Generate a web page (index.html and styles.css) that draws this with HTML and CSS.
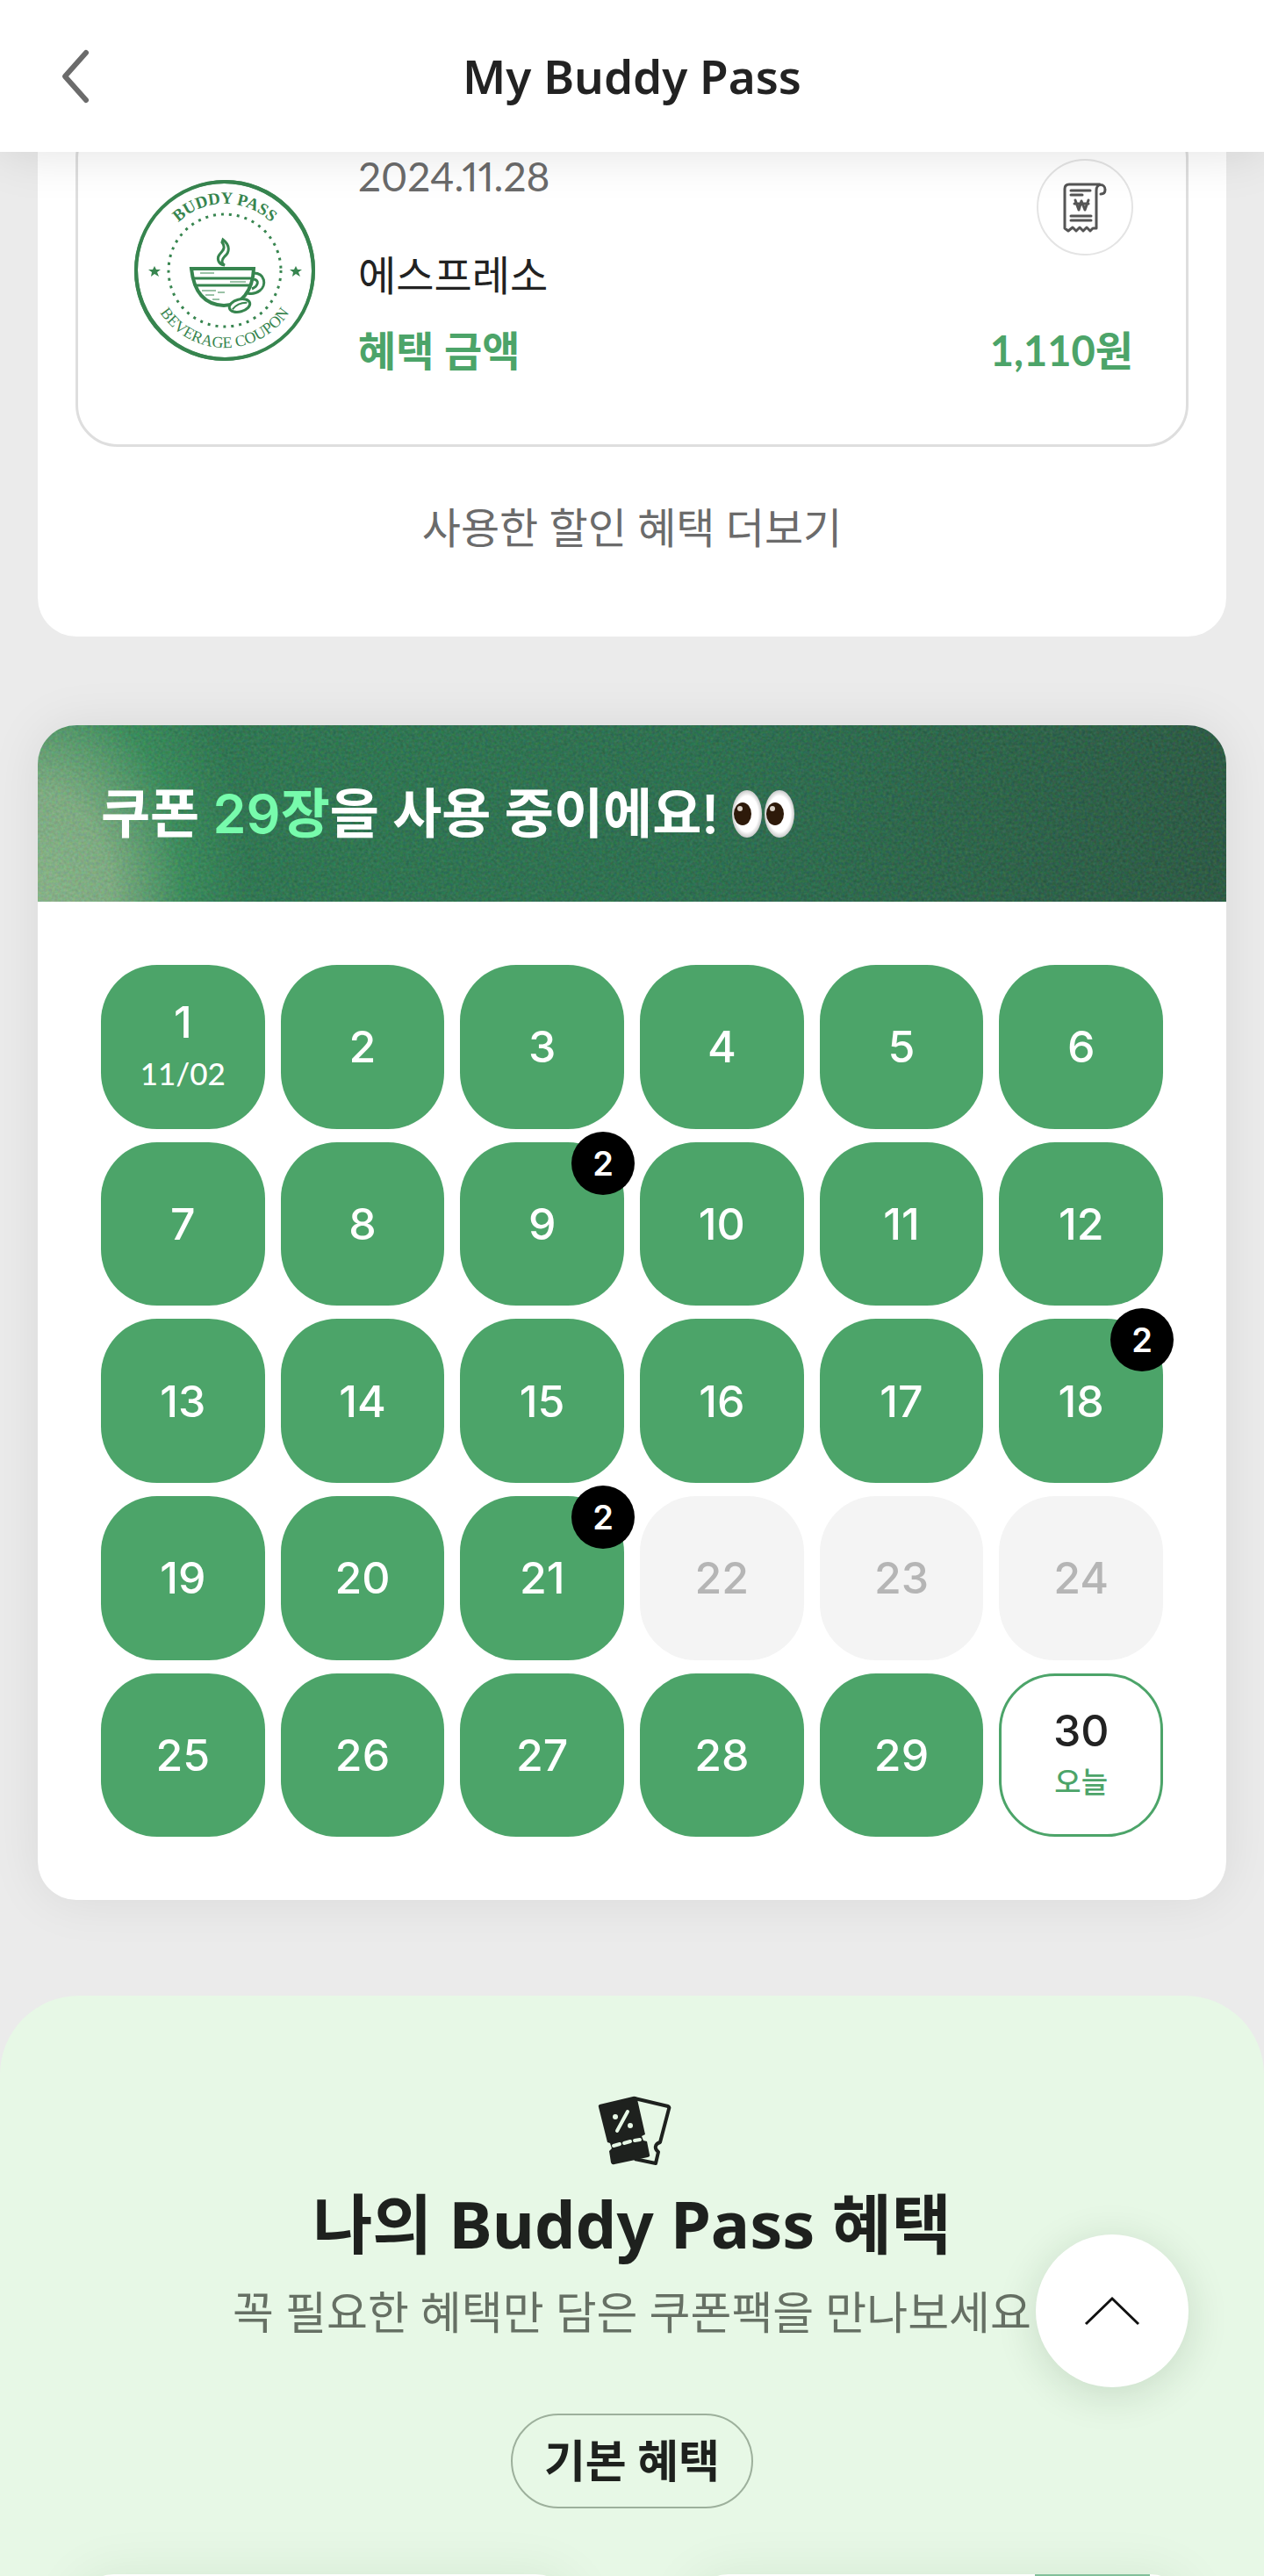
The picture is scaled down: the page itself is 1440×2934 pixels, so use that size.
FILE: index.html
```
<!doctype html>
<html lang="ko">
<head>
    <meta charset="UTF-8">
    <meta name="viewport" content="width=device-width, initial-scale=1.0">
    <title>My Buddy Pass</title>
    <link rel="stylesheet" href="styles.css">
</head>
<body>
<header class="header">
    <button class="back" type="button" aria-label="뒤로">
        <svg width="36" height="64" viewBox="0 0 36 64">
            <path d="M30 5 L6 32 L30 59" fill="none" stroke="#6b6b6b" stroke-width="6" stroke-linecap="round" stroke-linejoin="round"/>
        </svg>
    </button>
    <h1>My Buddy Pass</h1>
</header>

<main>
    <section class="history">
        <article class="receipt">
            <svg class="stamp" width="208" height="210" viewBox="0 0 208 210">
                <defs>
                    <path id="arcTop" d="M28 105 A76 76 0 0 1 180 105"/>
                    <path id="arcBottom" d="M16 105 A88 88 0 0 0 192 105"/>
                </defs>
                <g fill="none" stroke="#37854f">
                    <circle cx="104" cy="105" r="101" stroke-width="4"/>
                    <circle cx="105" cy="104" r="101" stroke-width="2"/>
                    <circle cx="103" cy="106" r="101" stroke-width="2"/>
                    <circle cx="104" cy="105" r="64" stroke-width="3" stroke-dasharray="3 6"/>
                    <path d="M102 70 C110 76 110 84 104 89 C100 93 100 97 104 99 C96 98 95 91 98 87 C103 82 105 78 101 73 Z" stroke-width="3"/>
                    <path d="M66 103 H137 C136 128 123 145 103 145 C82 144 69 131 66 103 Z" stroke-width="4"/>
                    <path d="M68 114 H136 M70 122 H134" stroke-width="3"/>
                    <path d="M78 128 H94 M82 133 H92 M96 130 H104 M90 138 H98 M76 108 H92 M110 118 H128" stroke-width="1"/>
                    <path d="M137 108 C150 108 152 122 144 128 C140 131 134 132 130 131 M137 115 C144 116 142 123 135 126" stroke-width="3"/>
                </g>
                <g transform="rotate(-15 121 145)" fill="none" stroke="#37854f">
                    <ellipse cx="121" cy="145" rx="12" ry="7" fill="#fff" stroke-width="3"/>
                    <path d="M112 147 Q120 141 130 144" stroke-width="2"/>
                </g>
                <g fill="#37854f">
                    <path d="M24 100 l2 4 5 0 -4 3 2 5 -5 -3 -4 3 1 -5 -4 -3 5 0 Z"/>
                    <path d="M185 100 l2 4 5 0 -4 3 2 5 -5 -3 -4 3 1 -5 -4 -3 5 0 Z"/>
                    <text class="stampTop" text-anchor="middle"><textPath href="#arcTop" startOffset="50%">BUDDY PASS</textPath></text>
                    <text class="stampBottom" text-anchor="middle"><textPath href="#arcBottom" startOffset="50%">BEVERAGE COUPON</textPath></text>
                </g>
            </svg>
            <div class="info">
                <div class="infoTop">
                    <div>
                        <p class="date">2024.11.28</p>
                        <p class="menu">에스프레소</p>
                    </div>
                    <button class="receiptBtn" type="button" aria-label="영수증">
                        <svg width="50" height="58" viewBox="0 0 50 58" fill="none" stroke="#555" stroke-width="3" stroke-linecap="round" stroke-linejoin="round">
                            <path d="M42 3 H7 Q2 3 2 8 V53 L6 56 L11 52 L15 56 L19 52 L23 56 L27 52 L31 56 L34 53 L38 53 V10 C38 1 48 2 48 9 Q48 14 43 14"/>
                            <path d="M9 10 H31 M9 15 H22 M9 39 H32 M9 44 H32"/>
                            <path d="M14 21 L18 32 L21 22 L25 32 L29 21 M13 25 H29"/>
                        </svg>
                    </button>
                </div>
                <p class="amount"><span>혜택 금액</span><span>1,110원</span></p>
            </div>
        </article>
        <button class="more" type="button">사용한 할인 혜택 더보기</button>
    </section>

    <section class="coupon">
        <div class="couponHead">
            <svg class="grain" width="100%" height="100%" aria-hidden="true">
                <filter id="noise" color-interpolation-filters="sRGB">
                    <feTurbulence type="fractalNoise" baseFrequency="0.3" numOctaves="2" seed="4"/>
                    <feColorMatrix values="1 0 0 0 -0.3  0 1 0 0 -0.05  0 0 1 0 -0.2  0 0 0 0 1"/>
                </filter>
                <rect width="100%" height="100%" filter="url(#noise)"/>
            </svg>
            <h2>쿠폰 <em>29장</em>을 사용 중이에요!</h2>
            <svg class="eyes" width="74" height="56" viewBox="0 0 74 56" role="img" aria-label="눈">
                <defs>
                    <radialGradient id="white" cx="50%" cy="50%" r="50%">
                        <stop offset="0.75" stop-color="#fff"/>
                        <stop offset="1" stop-color="#c9c9c9"/>
                    </radialGradient>
                </defs>
                <ellipse cx="18" cy="28" rx="17" ry="27" fill="url(#white)"/>
                <ellipse cx="55" cy="28" rx="17" ry="27" fill="url(#white)"/>
                <ellipse cx="13" cy="28" rx="10" ry="13" fill="#2e1a0a"/>
                <ellipse cx="50" cy="28" rx="10" ry="13" fill="#2e1a0a"/>
                <circle cx="10" cy="22" r="3" fill="#d8cfc4"/>
                <circle cx="47" cy="22" r="3" fill="#d8cfc4"/>
            </svg>
        </div>
        <ol class="days">
            <li>1<small>11/02</small></li>
            <li>2</li>
            <li>3</li>
            <li>4</li>
            <li>5</li>
            <li>6</li>
            <li>7</li>
            <li>8</li>
            <li>9<b>2</b></li>
            <li>10</li>
            <li>11</li>
            <li>12</li>
            <li>13</li>
            <li>14</li>
            <li>15</li>
            <li>16</li>
            <li>17</li>
            <li>18<b>2</b></li>
            <li>19</li>
            <li>20</li>
            <li>21<b>2</b></li>
            <li class="off">22</li>
            <li class="off">23</li>
            <li class="off">24</li>
            <li>25</li>
            <li>26</li>
            <li>27</li>
            <li>28</li>
            <li>29</li>
            <li class="today">30<small>오늘</small></li>
        </ol>
    </section>

    <section class="benefit">
        <svg class="ticket" width="90" height="80" viewBox="-6 0 90 80">
            <path d="M42 3 L80 12 Q82 13 81 15 L71 53 C65 55 64 60 69 64 L66 77 L42 72" fill="none" stroke="#1e211e" stroke-width="4" stroke-linejoin="round"/>
            <path d="M2 10 L40 1 Q44 0 45 4 L54 44 L50 46 L52 51 L56 52 L59 67 Q60 69 57 70 L19 78 Q16 79 15 76 L13 63 L16 60 L14 54 L11 53 L1 13 Q0 11 2 10 Z" fill="#1e211e"/>
            <path d="M22 40 L34 18 M18 57 L25 55 M30 54 L37 52 M42 51 L48 50" fill="none" stroke="#e7f8e6" stroke-width="4" stroke-linecap="round"/>
            <circle cx="20" cy="24" r="3" fill="#e7f8e6"/>
            <circle cx="37" cy="34" r="3" fill="#e7f8e6"/>
        </svg>
        <h2>나의 Buddy Pass 혜택</h2>
        <p>꼭 필요한 혜택만 담은 쿠폰팩을 만나보세요</p>
        <h3>기본 혜택</h3>
        <div class="cards">
            <div class="card"></div>
            <div class="card"><span class="ribbon"></span></div>
        </div>
    </section>
</main>

<button class="topBtn" type="button" aria-label="맨 위로">
    <svg width="64" height="36" viewBox="0 0 64 36">
        <path d="M2 33 L32 4 L62 33" fill="none" stroke="#111" stroke-width="3"/>
    </svg>
</button>
</body>
</html>
```
FILE: styles.css
```
*
{
    box-sizing: border-box;
    margin: 0;
    padding: 0;
}

html
{
    scrollbar-width: none;
}

body
{
    background-color: #ebebeb;
    color: #222;
    font-family: Lato, "Noto Sans CJK KR", sans-serif;
}

button
{
    border: none;
    background: none;
    color: inherit;
    font-family: inherit;
    cursor: pointer;
}

svg
{
    display: block;
}

.header
{
    position: fixed;
    top: 0;
    left: 0;
    right: 0;
    z-index: 2;
    height: 173px;
    display: grid;
    grid-template-columns: 1fr auto 1fr;
    align-items: center;
    padding: 0 68px;
    background-color: #fff;
    box-shadow: 0 0 56px rgba(0, 0, 0, 0.12);
}

.back
{
    justify-self: start;
}

.header h1
{
    font-family: "Noto Sans", "Noto Sans CJK KR", sans-serif;
    font-size: 53px;
    line-height: 72px;
    font-weight: 600;
}

main
{
    padding-top: 88px;
}

.history
{
    margin: 0 43px;
    padding: 44px 43px 88px;
    background-color: #fff;
    border-radius: 44px;
}

.receipt
{
    display: flex;
    gap: 48px;
    height: 377px;
    padding: 46px 60px 0 63px;
    border: 3px solid #dedede;
    border-radius: 48px;
}

.stamp
{
    margin-top: 22px;
}

.stampTop
{
    font-family: "Liberation Serif", serif;
    font-size: 19px;
    font-weight: bold;
}

.stampBottom
{
    font-family: "Liberation Serif", serif;
    font-size: 18px;
}

.info
{
    flex: 1;
}

.infoTop
{
    display: flex;
    justify-content: space-between;
}

.date
{
    font-size: 46px;
    line-height: 40px;
    font-variant-numeric: proportional-nums;
    color: #6b6b6b;
}

.menu
{
    margin-top: 56px;
    font-size: 47px;
    line-height: 72px;
}

.receiptBtn
{
    width: 110px;
    height: 110px;
    display: flex;
    align-items: center;
    justify-content: center;
    border: 2px solid #e4e4e4;
    border-radius: 50%;
}

.amount
{
    display: flex;
    justify-content: space-between;
    margin-top: 14px;
    font-size: 47px;
    line-height: 72px;
    font-weight: bold;
    color: #4ca469;
}

.more
{
    display: block;
    width: 100%;
    margin-top: 56px;
    font-size: 48px;
    line-height: 72px;
    color: #6b6b6b;
}

.coupon
{
    margin: 101px 43px 0;
    background-color: #fff;
    border-radius: 44px;
    box-shadow: 0 0 60px rgba(0, 0, 0, 0.08);
}

.couponHead
{
    position: relative;
    overflow: hidden;
    height: 201px;
    display: flex;
    align-items: center;
    gap: 14px;
    padding: 0 72px;
    border-radius: 44px 44px 0 0;
    background: radial-gradient(ellipse 240px 360px at 0 100%, #98bd94 0, #8cb58c 35%, rgba(64, 145, 97, 0.9) 70%, rgba(50, 117, 83, 0) 100%), linear-gradient(100deg, #337855 20%, #307053 55%, #2f5745 100%);
    color: #fff;
}

.grain
{
    position: absolute;
    inset: 0;
    opacity: 0.16;
}

.couponHead h2,
.eyes
{
    position: relative;
}

.couponHead h2
{
    font-family: Inter, "Noto Sans CJK KR", sans-serif;
    font-size: 61px;
    line-height: 90px;
    font-weight: 600;
}

.couponHead em
{
    font-style: normal;
    color: #77fbac;
}

.days
{
    display: grid;
    grid-template-columns: repeat(6, 1fr);
    gap: 15px 18px;
    padding: 72px;
    list-style: none;
    font-family: Inter, "Noto Sans CJK KR", sans-serif;
}

.days li
{
    position: relative;
    aspect-ratio: 1;
    display: flex;
    flex-direction: column;
    align-items: center;
    justify-content: center;
    border-radius: 64px;
    background-color: #4ca469;
    color: #fff;
    font-size: 50px;
    line-height: 60px;
    font-weight: 500;
}

.days small
{
    font-family: Lato, "Noto Sans CJK KR", sans-serif;
    font-size: 35px;
    line-height: 56px;
    font-weight: 500;
}

/* number of coupons used on that day */
.days b
{
    position: absolute;
    top: -12px;
    right: -12px;
    width: 72px;
    height: 72px;
    border-radius: 50%;
    background-color: #000;
    font-size: 38px;
    line-height: 72px;
    font-weight: 600;
    text-align: center;
}

.days .off
{
    background-color: #f4f4f4;
    color: #b5b5b5;
}

.days .today
{
    border: 3px solid #4ca469;
    background-color: #fff;
    color: #222;
}

.days .today small
{
    font-size: 33px;
    color: #4ca469;
}

.benefit
{
    display: flex;
    flex-direction: column;
    align-items: center;
    margin-top: 109px;
    padding: 114px 86px 0;
    border-radius: 90px 90px 0 0;
    background-color: #e7f8e6;
    color: #1e211e;
}

.benefit h2
{
    margin-top: 12px;
    font-family: "Noto Sans", "Noto Sans CJK KR", sans-serif;
    font-size: 74px;
    line-height: 108px;
    font-weight: bold;
}

.benefit p
{
    margin-top: 8px;
    font-size: 51px;
    line-height: 78px;
    color: #667064;
}

.benefit h3
{
    margin-top: 76px;
    padding: 0 36px;
    border: 2px solid #9db09c;
    border-radius: 54px;
    font-size: 51px;
    line-height: 104px;
    font-weight: bold;
}

.cards
{
    align-self: stretch;
    display: grid;
    grid-template-columns: 1fr 1fr;
    gap: 132px;
    margin-top: 75px;
}

.card
{
    height: 400px;
    padding: 0 44px;
    border-radius: 44px;
    background-color: #fff;
    box-shadow: 0 0 60px rgba(0, 60, 0, 0.08);
}

.ribbon
{
    display: block;
    width: 131px;
    height: 60px;
    margin-left: auto;
    background-color: #82c09a;
}

.topBtn
{
    position: fixed;
    right: 86px;
    bottom: 215px;
    width: 174px;
    height: 174px;
    display: flex;
    align-items: center;
    justify-content: center;
    border-radius: 50%;
    background-color: #fff;
    box-shadow: 0 8px 48px rgba(0, 40, 0, 0.14);
}
```
